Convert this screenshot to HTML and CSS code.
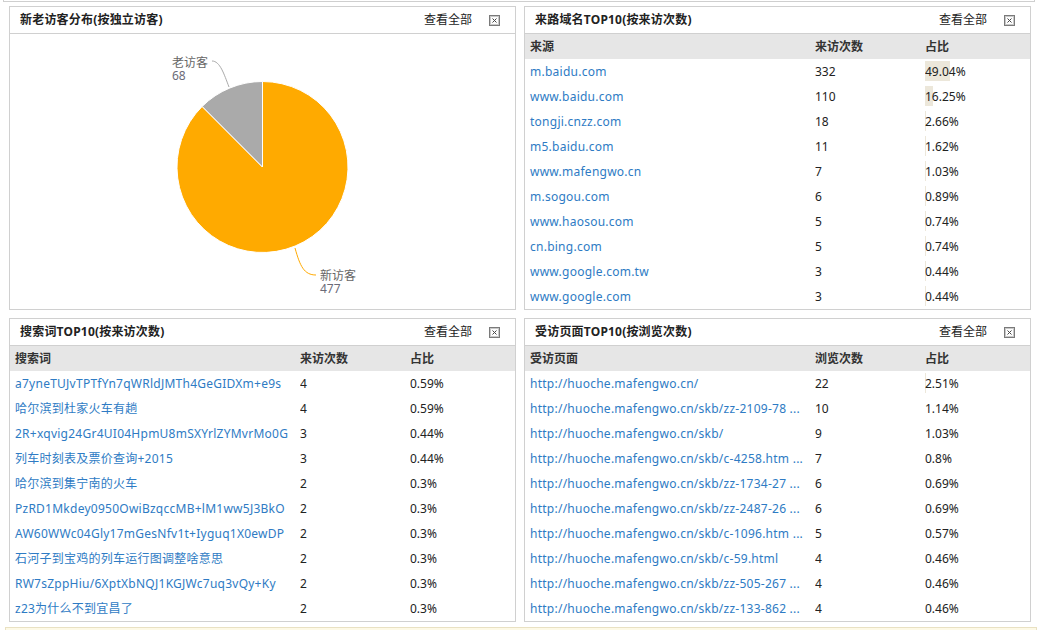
FILE: index.html
```html
<!DOCTYPE html>
<html lang="zh-CN">
<head>
<meta charset="utf-8">
<title>访客统计</title>
<link rel="stylesheet" href="styles.css">
</head>
<body>
<div class="topbar"></div>
<div class="grid">
  <section class="panel">
    <div class="panel-head">
      <h2 class="panel-title">新老访客分布(按独立访客)</h2>
      <a class="more">查看全部</a>
      <span class="close"><svg width="11" height="11" viewBox="0 0 11 11"><rect x="0.5" y="0.5" width="10" height="10" fill="#e8e8e8" stroke="#7a7a7a"/><rect x="1.5" y="1.5" width="8" height="8" fill="#fdfdfd" stroke="#c8c8c8"/><path d="M3.5 3.5L7.5 7.5M7.5 3.5L3.5 7.5" stroke="#444" stroke-width="1"/></svg></span>
    </div>
    <div class="chart">
      <svg width="505" height="275" viewBox="0 0 505 275">
        <path d="M252.5 133 L252.5 47.5 A85.5 85.5 0 1 1 192.14 72.44 Z" fill="#ffaa00" stroke="#fff" stroke-width="1"/>
        <path d="M252.5 133 L252.5 47.5 A85.5 85.5 0 0 0 192.14 72.44 Z" fill="#aaaaaa" stroke="#fff" stroke-width="1"/>
        <path d="M202 27 C210 27 214 40 219 53" fill="none" stroke="#aaaaaa" stroke-width="1"/>
        <path d="M285 214 C290 232 294 241 306 241" fill="none" stroke="#ffaa00" stroke-width="1"/>
      </svg>
      <div class="pie-label old"><span class="lbl">老访客</span><span class="num">68</span></div>
      <div class="pie-label new"><span class="lbl">新访客</span><span class="num">477</span></div>
    </div>
  </section>

  <section class="panel">
    <div class="panel-head">
      <h2 class="panel-title">来路域名TOP10(按来访次数)</h2>
      <a class="more">查看全部</a>
      <span class="close"><svg width="11" height="11" viewBox="0 0 11 11"><rect x="0.5" y="0.5" width="10" height="10" fill="#e8e8e8" stroke="#7a7a7a"/><rect x="1.5" y="1.5" width="8" height="8" fill="#fdfdfd" stroke="#c8c8c8"/><path d="M3.5 3.5L7.5 7.5M7.5 3.5L3.5 7.5" stroke="#444" stroke-width="1"/></svg></span>
    </div>
    <table class="tbl">
      <colgroup><col class="c1"><col class="c2"><col class="c3"></colgroup>
      <thead><tr><th>来源</th><th>来访次数</th><th>占比</th></tr></thead>
      <tbody>
        <tr><td><a>m.baidu.com</a></td><td>332</td><td><span class="pct"><i class="bar" style="width:24.5px"></i>49.04%</span></td></tr>
        <tr><td><a>www.baidu.com</a></td><td>110</td><td><span class="pct"><i class="bar" style="width:8.1px"></i>16.25%</span></td></tr>
        <tr><td><a>tongji.cnzz.com</a></td><td>18</td><td><span class="pct"><i class="bar" style="width:1.3px"></i>2.66%</span></td></tr>
        <tr><td><a>m5.baidu.com</a></td><td>11</td><td><span class="pct"><i class="bar" style="width:0.8px"></i>1.62%</span></td></tr>
        <tr><td><a>www.mafengwo.cn</a></td><td>7</td><td><span class="pct"><i class="bar" style="width:0.5px"></i>1.03%</span></td></tr>
        <tr><td><a>m.sogou.com</a></td><td>6</td><td><span class="pct"><i class="bar" style="width:0.4px"></i>0.89%</span></td></tr>
        <tr><td><a>www.haosou.com</a></td><td>5</td><td><span class="pct"><i class="bar" style="width:0.4px"></i>0.74%</span></td></tr>
        <tr><td><a>cn.bing.com</a></td><td>5</td><td><span class="pct"><i class="bar" style="width:0.4px"></i>0.74%</span></td></tr>
        <tr><td><a>www.google.com.tw</a></td><td>3</td><td><span class="pct"><i class="bar" style="width:0.2px"></i>0.44%</span></td></tr>
        <tr><td><a>www.google.com</a></td><td>3</td><td><span class="pct"><i class="bar" style="width:0.2px"></i>0.44%</span></td></tr>
      </tbody>
    </table>
  </section>

  <section class="panel">
    <div class="panel-head">
      <h2 class="panel-title">搜索词TOP10(按来访次数)</h2>
      <a class="more">查看全部</a>
      <span class="close"><svg width="11" height="11" viewBox="0 0 11 11"><rect x="0.5" y="0.5" width="10" height="10" fill="#e8e8e8" stroke="#7a7a7a"/><rect x="1.5" y="1.5" width="8" height="8" fill="#fdfdfd" stroke="#c8c8c8"/><path d="M3.5 3.5L7.5 7.5M7.5 3.5L3.5 7.5" stroke="#444" stroke-width="1"/></svg></span>
    </div>
    <table class="tbl">
      <colgroup><col class="c1"><col class="c2"><col class="c3"></colgroup>
      <thead><tr><th>搜索词</th><th>来访次数</th><th>占比</th></tr></thead>
      <tbody>
        <tr><td><a>a7yneTUJvTPTfYn7qWRldJMTh4GeGIDXm+e9s</a></td><td>4</td><td>0.59%</td></tr>
        <tr><td><a>哈尔滨到杜家火车有趟</a></td><td>4</td><td>0.59%</td></tr>
        <tr><td><a>2R+xqvig24Gr4UI04HpmU8mSXYrlZYMvrMo0G</a></td><td>3</td><td>0.44%</td></tr>
        <tr><td><a>列车时刻表及票价查询+2015</a></td><td>3</td><td>0.44%</td></tr>
        <tr><td><a>哈尔滨到集宁南的火车</a></td><td>2</td><td>0.3%</td></tr>
        <tr><td><a>PzRD1Mkdey0950OwiBzqccMB+lM1ww5J3BkO</a></td><td>2</td><td>0.3%</td></tr>
        <tr><td><a>AW60WWc04Gly17mGesNfv1t+Iyguq1X0ewDP</a></td><td>2</td><td>0.3%</td></tr>
        <tr><td><a>石河子到宝鸡的列车运行图调整啥意思</a></td><td>2</td><td>0.3%</td></tr>
        <tr><td><a>RW7sZppHiu/6XptXbNQJ1KGJWc7uq3vQy+Ky</a></td><td>2</td><td>0.3%</td></tr>
        <tr><td><a>z23为什么不到宜昌了</a></td><td>2</td><td>0.3%</td></tr>
      </tbody>
    </table>
  </section>

  <section class="panel">
    <div class="panel-head">
      <h2 class="panel-title">受访页面TOP10(按浏览次数)</h2>
      <a class="more">查看全部</a>
      <span class="close"><svg width="11" height="11" viewBox="0 0 11 11"><rect x="0.5" y="0.5" width="10" height="10" fill="#e8e8e8" stroke="#7a7a7a"/><rect x="1.5" y="1.5" width="8" height="8" fill="#fdfdfd" stroke="#c8c8c8"/><path d="M3.5 3.5L7.5 7.5M7.5 3.5L3.5 7.5" stroke="#444" stroke-width="1"/></svg></span>
    </div>
    <table class="tbl">
      <colgroup><col class="c1"><col class="c2"><col class="c3"></colgroup>
      <thead><tr><th>受访页面</th><th>浏览次数</th><th>占比</th></tr></thead>
      <tbody>
        <tr><td><a>http://huoche.mafengwo.cn/</a></td><td>22</td><td><span class="pct"><i class="bar" style="width:1.3px"></i>2.51%</span></td></tr>
        <tr><td><a>http://huoche.mafengwo.cn/skb/zz-2109-78 ...</a></td><td>10</td><td>1.14%</td></tr>
        <tr><td><a>http://huoche.mafengwo.cn/skb/</a></td><td>9</td><td>1.03%</td></tr>
        <tr><td><a>http://huoche.mafengwo.cn/skb/c-4258.htm ...</a></td><td>7</td><td>0.8%</td></tr>
        <tr><td><a>http://huoche.mafengwo.cn/skb/zz-1734-27 ...</a></td><td>6</td><td>0.69%</td></tr>
        <tr><td><a>http://huoche.mafengwo.cn/skb/zz-2487-26 ...</a></td><td>6</td><td>0.69%</td></tr>
        <tr><td><a>http://huoche.mafengwo.cn/skb/c-1096.htm ...</a></td><td>5</td><td>0.57%</td></tr>
        <tr><td><a>http://huoche.mafengwo.cn/skb/c-59.html</a></td><td>4</td><td>0.46%</td></tr>
        <tr><td><a>http://huoche.mafengwo.cn/skb/zz-505-267 ...</a></td><td>4</td><td>0.46%</td></tr>
        <tr><td><a>http://huoche.mafengwo.cn/skb/zz-133-862 ...</a></td><td>4</td><td>0.46%</td></tr>
      </tbody>
    </table>
  </section>
</div>
<div class="notice"></div>
</body>
</html>
```

FILE: styles.css
```css
* { box-sizing: border-box; }
html, body { margin: 0; padding: 0; background: #fff; }
body {
  font-family: "Noto Sans", "Noto Sans CJK SC", sans-serif;
  font-size: 12px;
  color: #333;
}
.topbar {
  height: 2px;
  margin: 0 3px;
  border: 1px solid #cfcfcf;
  border-top: 0;
}
.grid {
  display: grid;
  grid-template-columns: 507px 507px;
  grid-template-rows: 304px 304px;
  gap: 8px;
  margin: 4px 0 0 9px;
}
.panel {
  border: 1px solid #d0d0d0;
  background: #fff;
  overflow: hidden;
}
.panel-head {
  height: 27px;
  border-bottom: 1px solid #d0d0d0;
  display: flex;
  align-items: center;
  padding: 0 15px 0 10px;
}
.panel-title {
  flex: 1;
  margin: 0;
  font-size: 12px;
  font-weight: bold;
  letter-spacing: 0.2px;
  color: #222;
  line-height: 26px;
  white-space: nowrap;
}
.more {
  font-size: 12px;
  color: #222;
  margin-right: 17px;
  line-height: 26px;
  cursor: pointer;
}
.close {
  display: flex;
  width: 11px;
  height: 11px;
}
.chart {
  position: relative;
  height: 275px;
}
.chart svg { display: block; }
.pie-label {
  position: absolute;
  display: flex;
  flex-direction: column;
  font-size: 12px;
  line-height: 13px;
  white-space: nowrap;
}
.pie-label.old { left: 162px; top: 22px; }
.pie-label.new { left: 310px; top: 235px; }
.pie-label .lbl { color: #666; height: 13px; }
.pie-label .num { color: #6b6b78; height: 13px; }
.tbl {
  width: 100%;
  border-collapse: collapse;
  table-layout: fixed;
}
.c1 { width: 290px; }
.c2 { width: 110px; }
.tbl th, .tbl td {
  height: 25px;
  padding: 0 0 0 5px;
  text-align: left;
  white-space: nowrap;
  overflow: hidden;
  line-height: 25px;
}
.tbl td + td, .tbl th + th { padding-left: 0; }
.tbl th {
  background: #e6e6e6;
  font-weight: bold;
  color: #333;
}
.tbl td { color: #222; }
.tbl a { color: #2e7bc4; text-decoration: none; letter-spacing: 0.25px; }
.pct {
  position: relative;
  z-index: 0;
  display: inline-block;
}
.bar {
  position: absolute;
  left: 0;
  top: 2px;
  height: 20px;
  background: #ece7da;
  z-index: -1;
}
.notice {
  margin: 5px 1px 0 5px;
  height: 20px;
  background: #fdf9e6;
  border: 1px solid #e9e1c2;
}
```
